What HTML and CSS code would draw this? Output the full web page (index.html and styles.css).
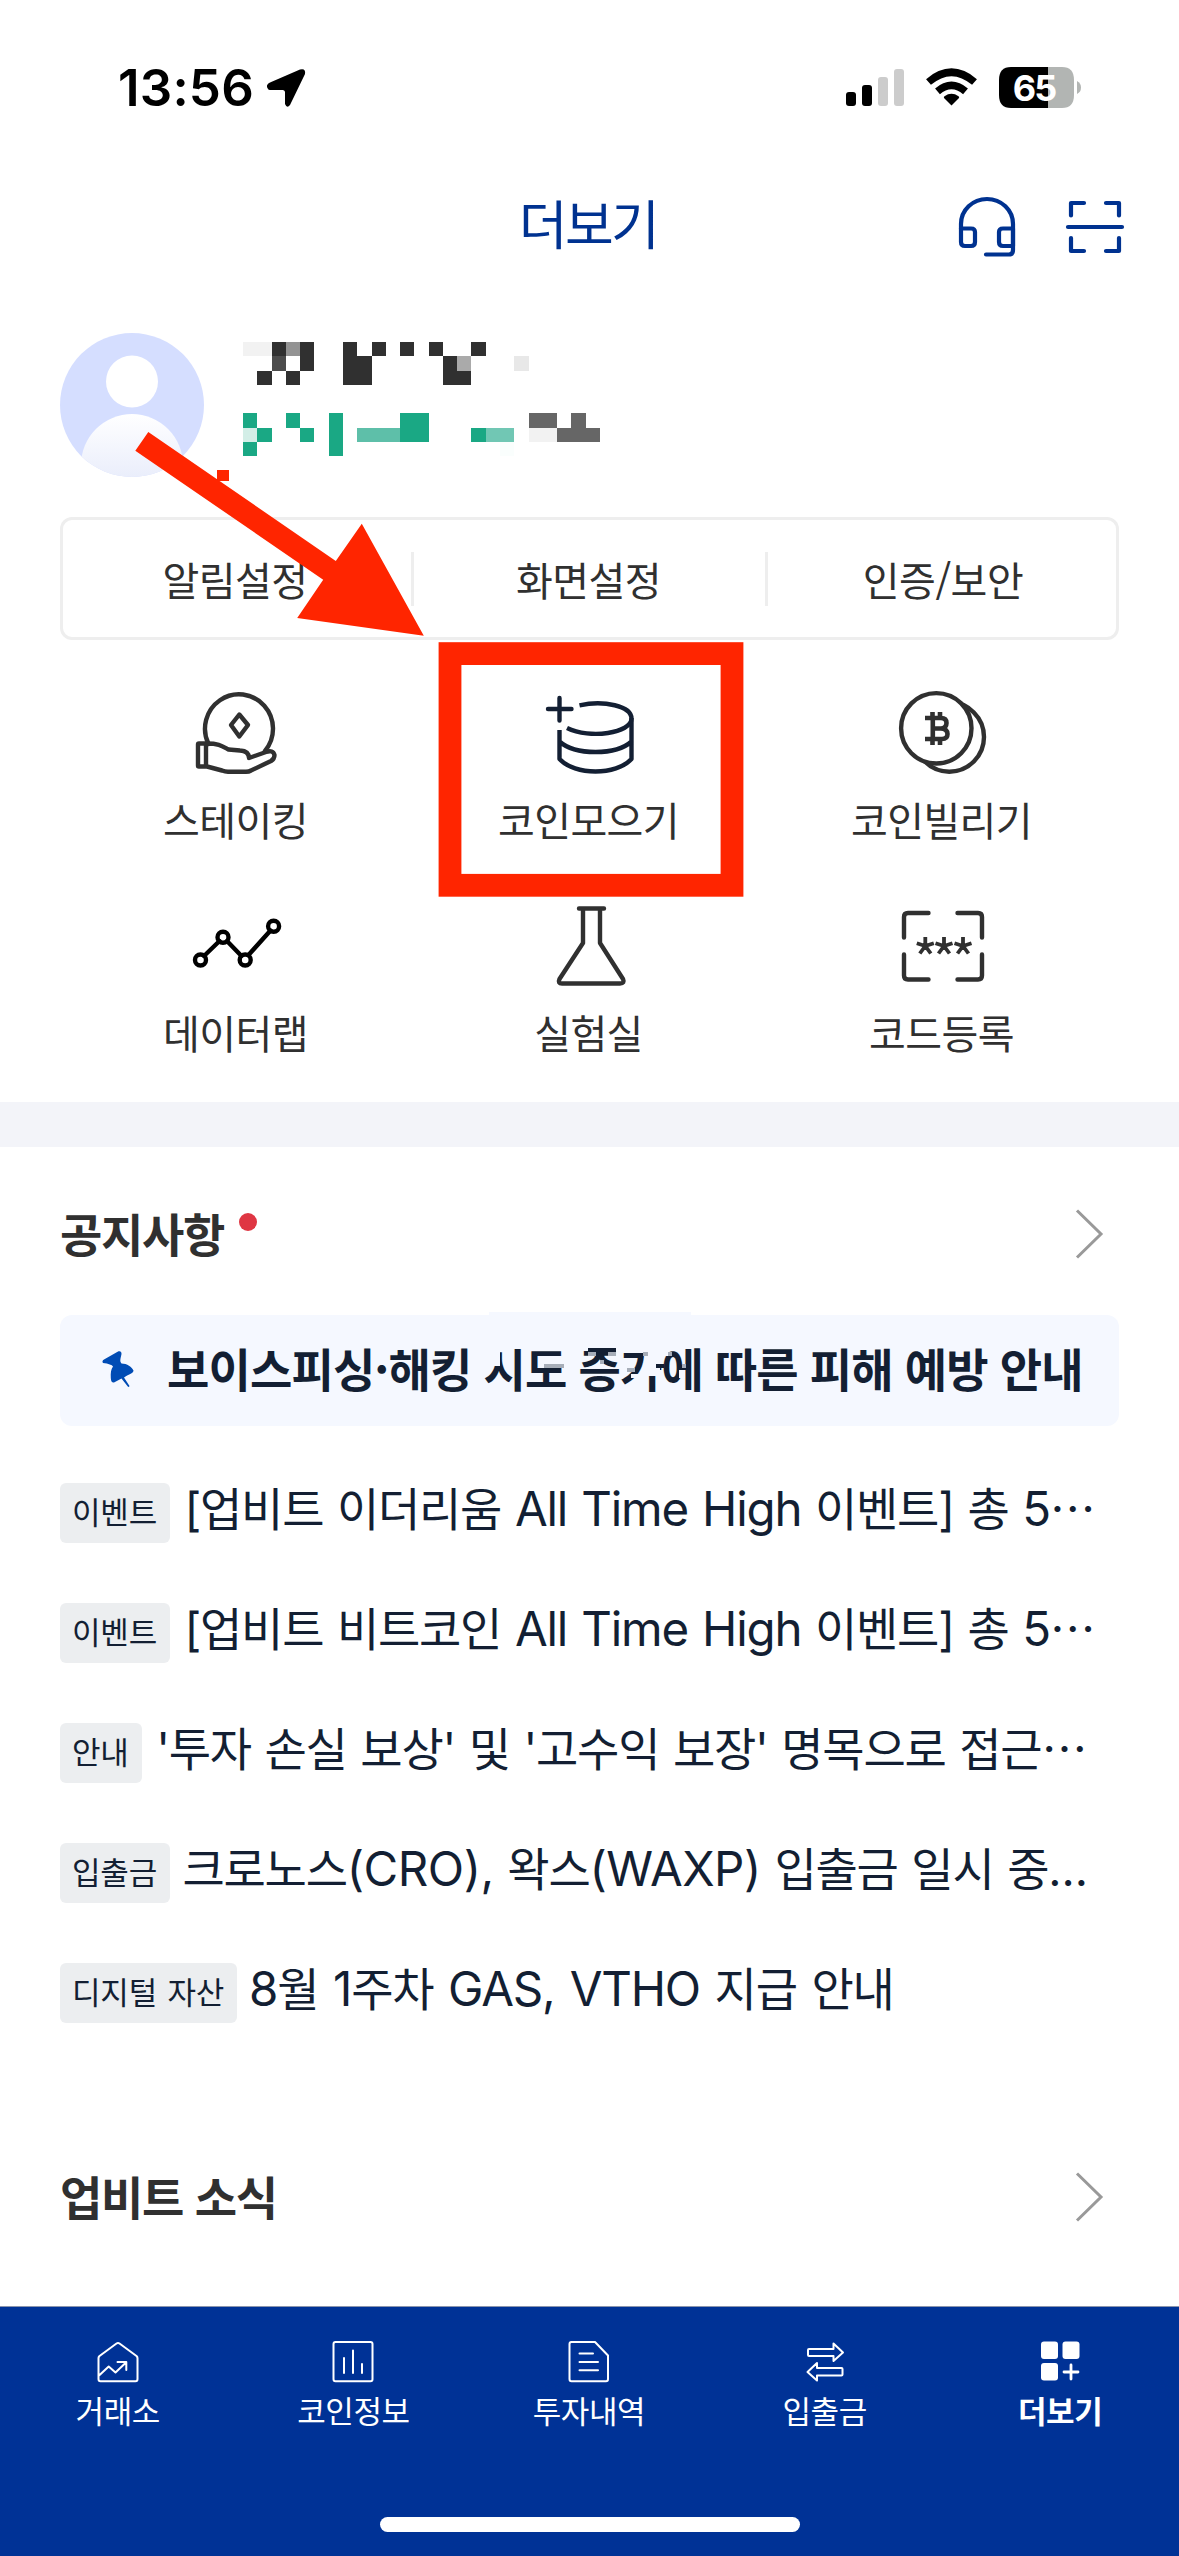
FILE: index.html
```html
<!DOCTYPE html>
<html lang="ko">
<head>
<meta charset="utf-8">
<title>더보기</title>
<link rel="stylesheet" href="styles.css">
</head>
<body>
<div class="screen">
  <div class="status">
    <span class="time">13:56</span>
    <svg class="loc" width="41" height="41" viewBox="265 68 41 41"><path d="M268 89 Q265 85 270 82.500 L300 69.500 Q306 68 305 74 L290 105 Q287 109 285 104 V92.500 Q285 90 282.500 90 H270 Q268.500 90 268 89Z"/></svg>
    <svg class="indicators" width="240" height="44" viewBox="844 66 240 44">
      <rect x="846" y="92" width="10" height="14" rx="3"/>
      <rect x="862" y="85" width="10" height="21" rx="3"/>
      <rect x="878" y="77" width="10" height="29" rx="3" fill="#ccc"/>
      <rect x="894" y="69" width="10" height="37" rx="3" fill="#ccc"/>
      <path d="M951.500 105.500 L944 98 Q943.500 97 944.500 96.200 Q951.500 91.500 958.500 96.200 Q959.500 97 959 98Z"/>
      <path d="M937.500 91.300 Q951.500 79.500 965.500 91.300" fill="none" stroke="#000" stroke-width="7.500"/>
      <path d="M928.500 82 Q951.500 62.500 974.500 82" fill="none" stroke="#000" stroke-width="7.500"/>
      <path d="M1011 67 H1048 V108 H1011 Q999 108 999 95 V80 Q999 67 1011 67Z"/>
      <path d="M1048 67 H1062 Q1074 67 1074 80 V95 Q1074 108 1062 108 H1048Z" fill="#b2b5b3"/>
      <path d="M1077 81 Q1081 83 1081 87.500 Q1081 92 1077 94Z" fill="#b2b5b3"/>
      <text class="battery" x="1034" y="101" text-anchor="middle">65</text>
    </svg>
  </div>

  <header class="header">
    <h1>더보기</h1>
    <svg class="actions" width="176" height="72" viewBox="955 191 176 72">
      <path d="M961 229 V224 A26 25 0 0 1 1013 224 V250 Q1013 254.500 1009 254.500 H986"/>
      <path d="M961 228.500 H971 Q975 228.500 975 232 V242 Q975 246 971 246 H965 Q961 246 961 242Z"/>
      <path d="M1013 228.500 H1003 Q999 228.500 999 232 V242 Q999 246 1003 246 H1013Z"/>
      <path d="M1068 227 H1122 M1071 215.500 V203 H1084 M1106 203 H1119 V215.500 M1071 238 V251 H1084 M1106 251 H1119 V238"/>
    </svg>
  </header>

  <section class="profile">
    <svg width="144" height="144" viewBox="0 0 144 144">
      <defs>
        <linearGradient id="body" x1="0" y1="0" x2="0" y2="1"><stop offset="0" stop-color="#fff"/><stop offset=".65" stop-color="#e9edfb"/></linearGradient>
        <clipPath id="disc"><circle cx="72" cy="72" r="72"/></clipPath>
      </defs>
      <circle cx="72" cy="72" r="72" fill="#d5deff"/>
      <circle cx="72" cy="48.500" r="26" fill="#fff"/>
      <circle cx="72" cy="132" r="51" fill="url(#body)" clip-path="url(#disc)"/>
    </svg>
    <svg class="masked" width="357" height="114" viewBox="0 0 25 8" preserveAspectRatio="none" shape-rendering="crispEdges">
      <path fill="#303030" d="M2 0h1v1h-1zM4 0h1v2h-1zM7 0h1v1h1v2h-2zM9 0h1v1h-1zM11 0h1v1h-1zM13 0h1v1h-1zM16 0h1v1h-1zM14 1h1v1h1v1h-2zM1 2h1v1h-1zM3 2h1v1h-1z"/>
      <path fill="#f2f2f2" d="M0 0h2v1h-2zM20 6h2v1h-2z"/>
      <path fill="#939393" d="M3 0h1v1h-1z"/><path fill="#4c4c4c" d="M2 1h1v1h-1z"/>
      <path fill="#aaa" d="M15 1h1v1h-1z"/><path fill="#e8e8e8" d="M19 1h1v1h-1z"/>
      <path fill="#1aa884" d="M0 5h1v1h-1zM3 5h1v1h-1zM6 5h1v3h-1zM11 5h2v2h-2zM1 6h1v1h-1zM4 6h1v1h-1zM16 6h1v1h-1zM0 7h1v1h-1z"/>
      <path fill="#d3eee7" d="M0 6h1v1h-1z"/><path fill="#5ebfa9" d="M8 6h3v1h-3z"/><path fill="#71c7b4" d="M17 6h2v1h-2z"/>
      <path fill="#666" d="M20 5h2v1h-2zM23 5h1v1h1v1h-3v-1h1z"/><path fill="#fafefd" d="M18 7h1v1h-1z"/>
    </svg>
  </section>

  <nav class="settings"><span>알림설정</span><span>화면설정</span><span>인증/보안</span></nav>

  <section class="menu">
    <div class="item">
      <svg width="100" height="100" viewBox="186 683 100 100">
        <path d="M208.500 744 A34 34.500 0 1 1 265 751"/>
        <path d="M239.300 714.500 L248 725 L239.300 736.500 L231 725Z"/>
        <path d="M206 744 V766.500 M198 744.500 Q198 743.500 199 743.500 H207 C219 743.500 222 746 228.500 749.500 L240 750.500 Q249 751 249 758 L266 752 Q273 749.500 274.500 755 Q274.500 759 271 761 L251 770.500 Q249 771.700 246 771.700 H228 Q225 771.700 222 770.500 L207 766.500 H199 Q198 766.500 198 765.500Z"/>
      </svg><span>스테이킹</span>
    </div>
    <div class="item">
      <svg class="navy" width="100" height="100" viewBox="539 683 100 100">
        <path d="M548 709 H571.500 M559.500 698 V720.500"/>
        <path stroke-linecap="butt" d="M579.500 705.300 C604 700 631.500 706 631.500 718.600 C631.500 733 590 739.500 567 728"/>
        <path stroke-linecap="butt" d="M559.500 730 V759 C575 775.700 616 775.700 631.500 759 V718 M559.500 741.500 C575 755.500 616 755.500 631.500 741.500"/>
      </svg><span>코인모으기</span>
    </div>
    <div class="item">
      <svg width="100" height="100" viewBox="892 683 100 100">
        <circle cx="949.300" cy="737" r="34.700"/><circle cx="936.300" cy="728.300" r="35.200" fill="#fff"/>
        <path stroke-linecap="butt" stroke-width="4.600" d="M925 718 H941 Q946.500 718 946.500 723 Q946.500 728 941 728.500 H933 M941 728.500 Q947.500 729 947.500 734 Q947.500 739 942 739 H925 M932.800 718 V739 M932.500 712 V718 M940 712 V718 M932.500 739 V745 M940 739 V745"/>
      </svg><span>코인빌리기</span>
    </div>
    <div class="item">
      <svg class="black" width="100" height="100" viewBox="186 896 100 100">
        <path d="M204 956 L219.500 941 M227 941 L241.500 956 M248.500 955 L270.500 930.500"/>
        <circle cx="200.500" cy="960" r="5.500"/><circle cx="223" cy="937.300" r="5.500"/><circle cx="245.200" cy="960" r="5.500"/><circle cx="273.600" cy="926.200" r="5.500"/>
      </svg><span>데이터랩</span>
    </div>
    <div class="item">
      <svg width="100" height="100" viewBox="539 896 100 100">
        <path d="M579 908.500 H604 M583 908.500 V943 L559.500 979 Q557.500 983.500 562 983.500 H620 Q625 983.500 623 979 L600 943 V908.500"/>
      </svg><span>실험실</span>
    </div>
    <div class="item">
      <svg width="100" height="100" viewBox="892 896 100 100">
        <path d="M904 937.500 V917 Q904 913 908 913 H928.500 M957.500 913 H978 Q982 913 982 917 V937.500 M904 954.500 V975.500 Q904 979.500 908 979.500 H928.500 M957.500 979.500 H978 Q982 979.500 982 975.500 V954.500"/>
        <path stroke-linecap="butt" stroke-width="3.800" d="M925.300 946 V937 M925.300 946 L916.800 943.300 M925.300 946 L933.800 943.300 M925.300 946 L919.800 953.500 M925.300 946 L930.800 953.500 M944 946 V937 M944 946 L935.500 943.300 M944 946 L952.500 943.300 M944 946 L938.500 953.500 M944 946 L949.500 953.500 M963 946 V937 M963 946 L954.500 943.300 M963 946 L971.500 943.300 M963 946 L957.500 953.500 M963 946 L968.500 953.500"/>
      </svg><span>코드등록</span>
    </div>
  </section>

  <div class="band"></div>

  <section class="notices">
    <div class="head">
      <h2>공지사항</h2><i class="dot"></i>
      <svg class="chevron" width="30" height="52" viewBox="0 0 30 52"><path d="M2 2.500 L26 26 L2 49.500"/></svg>
    </div>
    <div class="banner">
      <svg class="pin" width="34" height="38" viewBox="101 1350 34 38"><path d="M103 1363 Q101.500 1361 104 1359.500 L118.500 1351.300 Q121.500 1350.500 121.500 1354 C120.500 1359 119.500 1361 121.500 1363.500 C127 1363.500 132 1367 133.500 1370.500 C133.500 1373.500 128 1374.500 124 1377.500 L129.500 1386 Q128.500 1388 127 1385.500 L121.500 1378.500 L114 1382.500 Q111 1383 110.800 1378 C110.500 1373 111 1369 113 1366.500 Q111.500 1364 103 1363Z"/></svg>
      <p>보이스피싱·해킹 시도 증가에 따른 피해 예방 안내</p>
      <svg class="artifact" width="202" height="70" viewBox="489 1312 202 70" shape-rendering="crispEdges">
        <path fill="#f5f8ff" d="M489 1312h202v4h-202z M489 1348h11v18h-11z M648 1346h12v30h-12z M631 1374h8v4h-8z M664 1346h4v10h-4z M679 1370h6v8h-6z"/>
        <path fill="#a7aeb9" d="M544 1364h20v4h-20z M588 1352h8v4h-8z M608 1352h8v4h-8z M600 1360h4v4h-4z M643 1352h5v4h-5z M627 1368h8v4h-8z M668 1352h4v4h-4z M682 1364h4v4h-4z"/>
        <path fill="#131f33" d="M656 1364h8v4h-8z M588 1348h28v4h-28z"/>
      </svg>
    </div>
    <ul class="list">
      <li><em>이벤트</em><span>[업비트 이더리움 <b>All Time High</b> 이벤트] 총 <b>5</b>⋯</span></li>
      <li><em>이벤트</em><span>[업비트 비트코인 <b>All Time High</b> 이벤트] 총 <b>5</b>⋯</span></li>
      <li><em>안내</em><span>'투자 손실 보상' 및 '고수익 보장' 명목으로 접근⋯</span></li>
      <li><em>입출금</em><span class="tickers">크로노스<b>(CRO),</b> 왁스<b>(WAXP)</b> 입출금 일시 중…</span></li>
      <li><em>디지털 자산</em><span class="last"><b>8</b>월 <b>1</b>주차 <b>GAS, VTHO</b> 지급 안내</span></li>
    </ul>
  </section>

  <section class="news">
    <div class="head">
      <h2>업비트 소식</h2>
      <svg class="chevron" width="30" height="52" viewBox="0 0 30 52"><path d="M2 2.500 L26 26 L2 49.500"/></svg>
    </div>
  </section>

  <footer class="tabs">
    <div class="row">
      <div class="tab"><svg width="50" height="50" viewBox="93 2337 50 50"><path d="M98.500 2358 Q98.500 2357 99.500 2356 L116.500 2343.500 Q118 2342.500 119.500 2343.500 L136.500 2356 Q137.500 2357 137.500 2358 V2379 Q137.500 2381.300 135.500 2381.300 H100.500 Q98.500 2381.300 98.500 2379Z M98.500 2376 L108.700 2366.500 L115.500 2372.500 L126 2362.500 M117.500 2362 H126.300 V2370"/></svg><span>거래소</span></div>
      <div class="tab"><svg width="50" height="50" viewBox="328 2337 50 50"><rect x="333.500" y="2342" width="39" height="39.300" rx="2"/><path d="M344 2358 V2373 M353 2350.500 V2373 M362 2364 V2373"/></svg><span>코인정보</span></div>
      <div class="tab"><svg width="50" height="50" viewBox="564 2337 50 50"><path d="M571 2342 H595 L608 2355.500 V2379 Q608 2381.300 606 2381.300 H571.500 Q569.500 2381.300 569.500 2379 V2344 Q569.500 2342 571.500 2342Z M579.500 2353.500 H593 M579.500 2362 H598 M579.500 2370.300 H598"/></svg><span>투자내역</span></div>
      <div class="tab"><svg width="50" height="50" viewBox="799 2337 50 50"><path d="M808 2349 H832.500 V2343.500 L842 2352.500 L832.500 2361 V2356 H808 Q807 2356 807 2355 V2350 Q807 2349 808 2349Z M840.500 2368 H816 V2363 L806.500 2372 L816 2380.500 V2375.500 H840.500 Q841.500 2375.500 841.500 2374.500 V2369 Q841.500 2368 840.500 2368Z"/></svg><span>입출금</span></div>
      <div class="tab active"><svg width="50" height="50" viewBox="1035 2337 50 50"><g fill="#fff" stroke="none"><rect x="1041" y="2341.500" width="17" height="17.500" rx="3"/><rect x="1062.500" y="2341.500" width="17" height="17.500" rx="3"/><rect x="1041" y="2363" width="17" height="17.500" rx="3"/></g><path stroke-width="2.800" d="M1071 2365 V2379 M1064 2372 H1078"/></svg><span>더보기</span></div>
    </div>
    <div class="home"></div>
  </footer>

  <svg class="annotation" width="1179" height="2556" viewBox="0 0 1179 2556">
    <path fill="#ff2500" d="M148.300 432 L335.800 561 L361.800 523.700 L423.800 635.700 L297.200 618 L323.200 579.700 L135.300 450.700Z M217 470 h12 v11 h-12Z"/>
    <rect x="450" y="653.600" width="282" height="231.700" fill="none" stroke="#ff2500" stroke-width="22.800"/>
  </svg>
</div>
</body>
</html>
```
FILE: styles.css
```css
* { box-sizing: border-box; }
body { margin: 0; background: #fff; font-family: "Noto Sans CJK KR", sans-serif; color: #303030; }
h1, h2, p, ul { margin: 0; padding: 0; }
.screen { position: relative; width: 1179px; height: 2556px; display: flex; flex-direction: column; overflow: hidden; background: #fff; }

.status { height: 176px; display: flex; align-items: center; padding: 0 95px 0 118px; }
.time { width: 147px; font: 600 51px/60px Inter, sans-serif; letter-spacing: .2px; color: #000; white-space: nowrap; }
.indicators { margin-left: auto; }
.battery { font: 700 36px Inter, sans-serif; letter-spacing: -2px; fill: #fff; }

.header { height: 91px; display: grid; grid-template-columns: 1fr auto 1fr; align-items: center; padding: 0 48px; }
.header h1 { grid-column: 2; padding-right: 3px; font-size: 53px; font-weight: 400; line-height: 80px; letter-spacing: -2.6px; color: #003290; }
.actions { grid-column: 3; justify-self: end; margin-top: 11px; fill: none; stroke: #003290; stroke-width: 4.2; stroke-linecap: round; stroke-linejoin: round; }

.profile { height: 250px; padding: 66px 60px 0; display: flex; gap: 39px; }
.masked { margin-top: 9px; }

.settings { height: 123px; margin: 0 60px; box-shadow: inset 0 0 0 3px #eee; border-radius: 12px; display: grid; grid-template-columns: repeat(3, 1fr); align-items: center; }
.settings span { height: 54px; padding-right: 3px; text-align: center; font-size: 40px; line-height: 54px; letter-spacing: -.5px; }
.settings span + span { margin-left: -2px; border-left: 3px solid #eee; }
.settings span:last-child { margin-left: -1px; padding-right: 1px; }

.menu { height: 462px; padding: 43px 61px 0 59px; display: grid; grid-template-columns: repeat(3, 1fr); grid-auto-rows: 166px; row-gap: 47px; }
.item { display: flex; flex-direction: column; align-items: center; gap: 6px; }
.item svg { fill: none; stroke: #303030; stroke-width: 4.4; stroke-linecap: round; stroke-linejoin: round; }
.item svg.navy { stroke: #131f33; }
.item svg.black { stroke: #000; }
.item span { font-size: 40px; line-height: 60px; letter-spacing: -.6px; white-space: nowrap; }

.band { height: 45px; background: #f3f4f9; }

.head { display: flex; align-items: center; padding: 0 74px 0 60px; }
.head h2 { margin-top: -1px; font-size: 46px; line-height: 60px; font-weight: 700; letter-spacing: -1.3px; }
.dot { width: 18px; height: 18px; margin: -22px 0 0 15px; border-radius: 50%; background: #df3643; }
.chevron { margin: 3px 0 0 auto; fill: none; stroke: #999; stroke-width: 3; }
.notices .head { height: 168px; padding-top: 3px; }

.banner { position: relative; height: 111px; margin: 0 60px; padding: 0 0 8px 41px; border-radius: 12px; background: #f5f8ff; display: flex; align-items: center; gap: 32px; color: #131f33; }
.banner p { font-size: 46px; line-height: 60px; font-weight: 700; letter-spacing: -.85px; white-space: nowrap; }
.pin { fill: #004cb5; margin-top: 5px; }
.artifact { position: absolute; left: 429px; top: -3px; }

.list { list-style: none; padding: 57px 60px 0; display: grid; row-gap: 60px; }
.list li { height: 60px; display: flex; align-items: center; color: #131f33; }
.list em { height: 60px; padding: 0 13px 0 12px; border-radius: 6px; background: #eceef0; font-style: normal; font-size: 31px; line-height: 56px; letter-spacing: -.2px; word-spacing: 2px; white-space: nowrap; }
.list span { margin: -8px 0 0 14.5px; font-family: Inter, "Noto Sans CJK KR", sans-serif; font-size: 46px; line-height: 60px; letter-spacing: -1.25px; word-spacing: 2px; white-space: nowrap; }
.list b { font-weight: 400; font-size: 47.5px; letter-spacing: -1.2px; }
.list .tickers { margin-left: 12.5px; }
.list .tickers b { letter-spacing: -.5px; }
.list .last { margin-left: 12px; word-spacing: 3px; }

.news { height: 283px; padding-top: 142px; }
.news .head { height: 60px; }

.tabs { height: 250px; border-top: 1px solid #8a94ad; background: #003296; color: #fff; display: flex; flex-direction: column; align-items: center; }
.row { width: 1179px; height: 210px; padding: 30px 1px 0 0; display: grid; grid-template-columns: repeat(5, 1fr); }
.tab { display: flex; flex-direction: column; align-items: center; }
.tab svg { fill: none; stroke: #fff; stroke-width: 2; stroke-linejoin: round; stroke-linecap: round; }
.tab span { font-size: 31px; line-height: 46px; letter-spacing: -.4px; }
.tab.active span { font-weight: 700; }
.home { width: 420px; height: 15px; border-radius: 8px; background: #fff; }

.annotation { position: absolute; left: 0; top: 0; pointer-events: none; }
```
